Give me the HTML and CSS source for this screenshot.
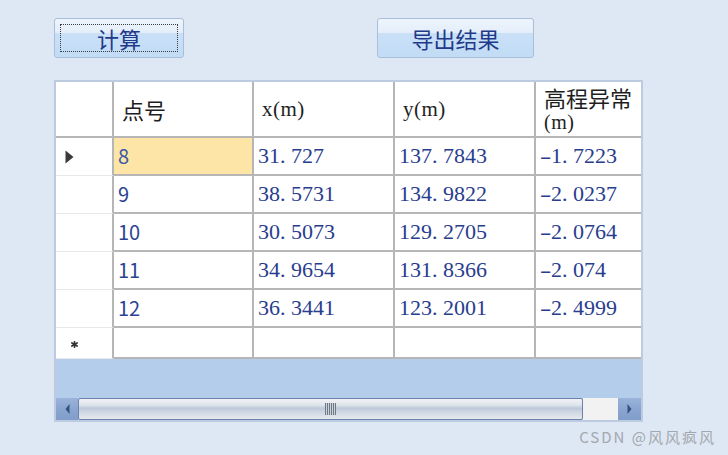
FILE: index.html
```html
<!DOCTYPE html>
<html lang="zh">
<head>
<meta charset="utf-8">
<title>计算</title>
<link rel="stylesheet" href="styles.css">
</head>
<body>
<div class="page">
  <div class="toolbar">
    <button class="btn btn-calc"><span class="focus">计算</span></button>
    <button class="btn btn-export"><span class="label">导出结果</span></button>
  </div>

  <div class="frame">
    <div class="viewport">
      <div class="grid">
        <div class="c rh hd"></div>
        <div class="c hd cjk">点号</div>
        <div class="c hd lat">x(m)</div>
        <div class="c hd lat">y(m)</div>
        <div class="c hd cjk two"><div class="two-in"><div>高程异常</div><div class="lat">(m)</div></div></div>

        <div class="c rh"><svg width="9" height="14" viewBox="0 0 9 14"><polygon points="0.5,0.5 8.5,7 0.5,13.5" fill="#3a3a3a"/></svg></div>
        <div class="c id sel">8</div>
        <div class="c num">31<span class="dt">.</span>727</div>
        <div class="c num">137<span class="dt">.</span>7843</div>
        <div class="c num"><span class="neg">-</span>1<span class="dt">.</span>7223</div>

        <div class="c rh"></div>
        <div class="c id">9</div>
        <div class="c num">38<span class="dt">.</span>5731</div>
        <div class="c num">134<span class="dt">.</span>9822</div>
        <div class="c num"><span class="neg">-</span>2<span class="dt">.</span>0237</div>

        <div class="c rh"></div>
        <div class="c id">10</div>
        <div class="c num">30<span class="dt">.</span>5073</div>
        <div class="c num">129<span class="dt">.</span>2705</div>
        <div class="c num"><span class="neg">-</span>2<span class="dt">.</span>0764</div>

        <div class="c rh"></div>
        <div class="c id">11</div>
        <div class="c num">34<span class="dt">.</span>9654</div>
        <div class="c num">131<span class="dt">.</span>8366</div>
        <div class="c num"><span class="neg">-</span>2<span class="dt">.</span>074</div>

        <div class="c rh"></div>
        <div class="c id">12</div>
        <div class="c num">36<span class="dt">.</span>3441</div>
        <div class="c num">123<span class="dt">.</span>2001</div>
        <div class="c num"><span class="neg">-</span>2<span class="dt">.</span>4999</div>

        <div class="c rh newrow"><svg width="7" height="7" viewBox="0 0 7 7"><g stroke="#333" stroke-width="1.7" stroke-linecap="round"><line x1="3.5" y1="0.8" x2="3.5" y2="6.2"/><line x1="0.9" y1="2" x2="6.1" y2="5"/><line x1="0.9" y1="5" x2="6.1" y2="2"/></g></svg></div>
        <div class="c"></div>
        <div class="c"></div>
        <div class="c"></div>
        <div class="c"></div>
      </div>
    </div>
    <div class="hscroll">
      <div class="sb-btn"><svg width="5" height="10" viewBox="0 0 5 10"><polygon points="4.5,0 0.5,5 4.5,10" fill="#34507f"/></svg></div>
      <div class="thumb"><span class="grip"></span></div>
      <div class="track"></div>
      <div class="sb-btn sb-right"><svg width="5" height="10" viewBox="0 0 5 10"><polygon points="0.5,0 4.5,5 0.5,10" fill="#34507f"/></svg></div>
    </div>
  </div>

  <div class="watermark">CSDN @风风疯风</div>
</div>
</body>
</html>
```
FILE: styles.css
```css
* { box-sizing: border-box; }

html, body {
  margin: 0;
  padding: 0;
}

body {
  background: #dee8f4;
  font-family: "Noto Sans CJK SC", "Noto Sans", sans-serif;
  width: 728px;
  height: 455px;
  overflow: hidden;
}

.page {
  position: relative;
  width: 728px;
  height: 455px;
}

.toolbar {
  display: flex;
  gap: 193px;
  padding: 18px 0 0 54px;
}

.btn {
  height: 40px;
  padding: 5px;
  margin: 0;
  border: 1px solid #a8bedb;
  border-radius: 3px;
  background: linear-gradient(#edf4fc 0%, #e4eefa 36%, #c9e0f7 38%, #c2dcf6 100%);
  color: #1f3a8a;
  font-family: "Noto Sans CJK SC", sans-serif;
  font-size: 22px;
  display: flex;
  align-items: stretch;
  justify-content: stretch;
  line-height: 1;
}

.btn-calc { width: 130px; }
.btn-export { width: 157px; }

.focus, .label {
  flex: 1;
  display: flex;
  align-items: center;
  justify-content: center;
}

.focus {
  border: 1px dotted #3c3c3c;
}

.label {
  border: 1px solid transparent;
}

.frame {
  margin: 22px 0 0 54px;
  width: 589px;
  height: 342px;
  border: 2px solid #bccbe0;
  display: flex;
  flex-direction: column;
  background: #b3cdeb;
}

.viewport {
  flex: 1;
  overflow: hidden;
}

.grid {
  display: grid;
  grid-template-columns: 58px 140px 141px 141px 124px;
  grid-template-rows: 56px repeat(5, 38px) 31px;
  width: max-content;
}

.c {
  background: #fff;
  border-right: 2px solid #b6b6b6;
  border-bottom: 2px solid #b6b6b6;
  display: flex;
  align-items: center;
  padding-left: 4px;
  white-space: nowrap;
}

.rh {
  border-bottom: 1px solid #e8e8e8;
  padding-left: 9px;
}

.rh.hd {
  border-bottom: 2px solid #b6b6b6;
}

.rh.newrow {
  padding-left: 15px;
  padding-top: 2px;
}

.hd {
  padding-left: 8px;
  color: #1e1e1e;
}

.cjk {
  font-family: "Noto Sans CJK SC", sans-serif;
  font-size: 22px;
}

.lat {
  font-family: "Liberation Serif", serif;
  font-size: 21px;
  letter-spacing: 0.5px;
}

.two {
  align-items: flex-start;
  padding-top: 3px;
}

.two-in {
  line-height: 24px;
}

.two-in .lat {
  font-size: 20px;
  line-height: 24px;
  padding-top: 1px;
}

.id {
  font-family: "Noto Sans CJK SC", sans-serif;
  font-size: 20px;
  line-height: 1;
  color: #2c4393;
}

.sel {
  background: #fce5a6;
  color: #3b5aa6;
}

.num {
  font-family: "Liberation Serif", serif;
  font-size: 22px;
  color: #283d8e;
}

.dt {
  display: inline-block;
  width: 11px;
}

.neg {
  display: inline-block;
  width: 11px;
  text-align: center;
  transform: scaleX(1.6);
}

.hscroll {
  height: 22px;
  display: flex;
  flex: none;
}

.sb-btn {
  width: 22px;
  background: linear-gradient(#9ab3da, #8aa5d0 50%, #819dca);
  display: flex;
  align-items: center;
  justify-content: center;
}

.sb-right {
  width: 23px;
}

.thumb {
  width: 505px;
  border: 1px solid #6c82ad;
  border-radius: 2px;
  background: linear-gradient(#f0f2f5 0%, #dfe5ec 30%, #bdc9d9 46%, #cbd5e2 62%, #e6e9ee 100%);
  display: flex;
  align-items: center;
  justify-content: center;
}

.grip {
  width: 11px;
  height: 12px;
  background: repeating-linear-gradient(90deg, #6e7784 0 1px, #cdd3db 1px 2px);
}

.track {
  width: 35px;
  background: #f2f2f2;
}

.watermark {
  position: absolute;
  right: 12px;
  bottom: 8px;
  font-family: "Noto Sans CJK SC", "Noto Sans", sans-serif;
  font-size: 15px;
  color: #a3a7ae;
  letter-spacing: 2px;
}
```
